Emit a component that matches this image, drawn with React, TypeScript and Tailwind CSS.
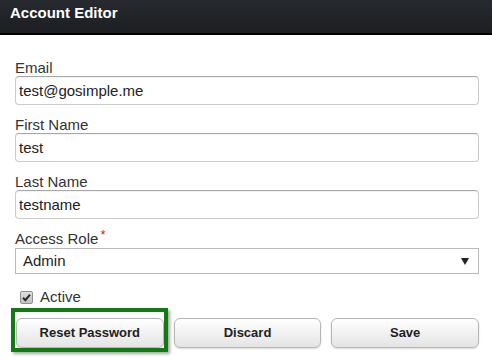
import { useState } from "react";

const fields = [
  { label: "Email", value: "test@gosimple.me" },
  { label: "First Name", value: "test" },
  { label: "Last Name", value: "testname" },
];

export default function App() {
  const [active, setActive] = useState(true);

  return (
    <div className="w-[492px] h-[359px] bg-white overflow-hidden font-['Liberation_Sans',Arial,sans-serif] text-[#333]">
      {/* Title bar */}
      <div className="h-[35px] bg-gradient-to-b from-[#272a2e] to-[#1c1e21] border-b-2 border-black px-[10px] pt-[4px]">
        <h1 className="text-[15px] font-bold text-white leading-[18px]">Account Editor</h1>
      </div>

      <div className="pl-[15px] pr-[13px] pt-[25px]">
        {fields.map((f) => (
          <div key={f.label} className="mb-[12px]">
            <label className="block text-[15px] leading-[16px] h-[16px]">{f.label}</label>
            <input
              readOnly
              value={f.value}
              className="block w-full h-[29px] px-[3px] text-[15px] text-[#222] bg-white border border-[#cbcbcb] border-t-[#a8a8a8] rounded-[4px] shadow-[inset_0_1px_1px_rgba(0,0,0,0.06)] outline-none"
            />
          </div>
        ))}

        {/* Access role */}
        <div>
          <label className="block text-[15px] leading-[16px] h-[17px]">
            Access Role<span className="text-[#e0201a] text-[13px] relative -top-[5px] ml-[2px]">*</span>
          </label>
          <div className="flex items-center h-[26px] border border-[#b9b9b9] bg-white pl-[7px] pr-[9px]">
            <span className="flex-1 text-[15px] text-[#222]">Admin</span>
            <svg width="8" height="7" viewBox="0 0 8 7">
              <polygon points="0,0 8,0 4,7" fill="#222" />
            </svg>
          </div>
        </div>

        {/* Active */}
        <label className="flex items-center gap-[7px] mt-[15px] ml-[5px] h-[16px] cursor-pointer" onClick={() => setActive(!active)}>
          <span className="flex items-center justify-center w-[13px] h-[13px] rounded-[2px] border border-[#8f8f8f] bg-gradient-to-b from-[#dcdcdc] to-[#c4c4c4]">
            {active && (
              <svg width="9" height="9" viewBox="0 0 9 9">
                <path d="M1 4.8 L3.4 7.2 L8 1.6" stroke="#2a2a2a" strokeWidth="2" fill="none" />
              </svg>
            )}
          </span>
          <span className="text-[15px] text-[#333]">Active</span>
        </label>

        {/* Buttons */}
        <div className="grid grid-cols-3 gap-[10px] mt-[13px] pl-px">
          {["Reset Password", "Discard", "Save"].map((b, i) => (
            <div key={b} className="relative">
              <button className="w-full h-[30px] rounded-[6px] border border-[#b5b5b5] bg-gradient-to-b from-white to-[#e4e4e4] shadow-[0_1px_2px_rgba(0,0,0,0.15)] text-[13px] font-bold text-[#222]">
                {b}
              </button>
              {i === 0 && (
                <div className="absolute -left-[5px] -top-[10px] -right-[4px] -bottom-[4px] border-[4px] border-[#137a13] shadow-[2px_2px_3px_rgba(0,0,0,0.35)] pointer-events-none" />
              )}
            </div>
          ))}
        </div>
      </div>
    </div>
  );
}
